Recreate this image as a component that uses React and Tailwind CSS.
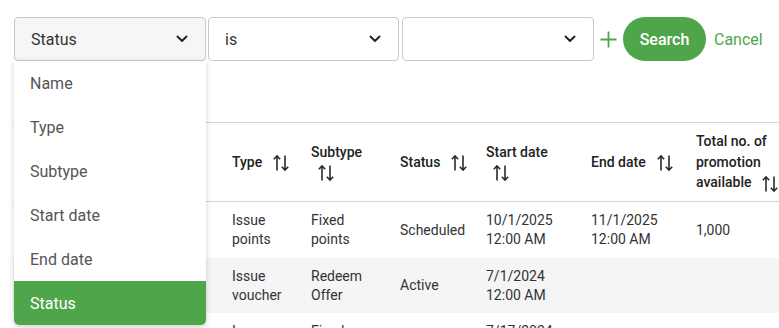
import React from "react";

const GREEN = "#4fa64a";

function Chevron() {
  return (
    <svg width="12" height="8" viewBox="0 0 12 8" fill="none">
      <path d="M1.5 1.5l4.5 4.5 4.5-4.5" stroke="#222" strokeWidth="1.9" strokeLinecap="round" strokeLinejoin="round" />
    </svg>
  );
}

function SortIcon() {
  return (
    <svg className="inline-block align-middle" width="18" height="18" viewBox="0 0 18 18" fill="none">
      <path d="M5 16.5V2M1.8 5.2L5 2l3.2 3.2" stroke="#2b2b2b" strokeWidth="1.6" />
      <path d="M13 1.5V16M9.8 12.8L13 16l3.2-3.2" stroke="#2b2b2b" strokeWidth="1.6" />
    </svg>
  );
}

function Select({ label, className = "", active = false }) {
  return (
    <div
      className={`flex h-[44px] items-center justify-between rounded-[4px] border border-[#c9c9c9] pl-[16px] pr-[17px] text-[16px] text-[#333] ${
        active ? "bg-[#f6f6f6]" : "bg-white"
      } ${className}`}
    >
      <span className="pt-[2px]">{label}</span>
      <Chevron />
    </div>
  );
}

const cols = "grid grid-cols-[38px_165px_79px_89px_86px_105px_105px_130px]";

const rows = [
  {
    name: "FQ | 1000 points",
    type: ["Issue", "points"],
    subtype: ["Fixed", "points"],
    status: "Scheduled",
    start: ["10/1/2025", "12:00 AM"],
    end: ["11/1/2025", "12:00 AM"],
    total: "1,000",
    h: "h-[56px]",
    bg: "bg-white",
  },
  {
    name: "Redeem offer",
    type: ["Issue", "voucher"],
    subtype: ["Redeem", "Offer"],
    status: "Active",
    start: ["7/1/2024", "12:00 AM"],
    end: [],
    total: "",
    h: "h-[55px]",
    bg: "bg-[#f5f5f5]",
  },
  {
    name: "FQ | 1000 points | 0500",
    type: ["Issue", "points"],
    subtype: ["Fixed", "points"],
    status: "Active",
    start: ["7/17/2024", "12:00 AM"],
    end: [],
    total: "",
    h: "h-[56px]",
    bg: "bg-white",
  },
];

function Lines({ items }) {
  return (
    <div>
      {items.map((t) => (
        <div key={t}>{t}</div>
      ))}
    </div>
  );
}

export default function App() {
  const menu = ["Name", "Type", "Subtype", "Start date", "End date", "Status"];

  return (
    <div className="relative h-[328px] w-[779px] overflow-hidden bg-white font-['Roboto','Liberation_Sans',sans-serif]">
      {/* Filter bar */}
      <div className="flex items-center pl-[14px] pt-[17px]">
        <Select label="Status" active className="w-[192px]" />
        <Select label="is" className="ml-[2px] w-[191px]" />
        <Select label="" className="ml-[3px] w-[192px]" />
        <svg className="ml-[6px]" width="17" height="17" viewBox="0 0 17 17" fill="none">
          <path d="M8.5 0.5v16M0.5 8.5h16" stroke={GREEN} strokeWidth="1.8" />
        </svg>
        <button
          type="button"
          className="ml-[6px] flex h-[44px] w-[83px] items-center justify-center rounded-full bg-[#4fa64a] pt-[2px] text-[16px] font-medium text-white"
        >
          Search
        </button>
        <button type="button" className="ml-[8px] pt-[2px] text-[16px] text-[#4fa64a]">
          Cancel
        </button>
      </div>

      {/* Table */}
      <div className="ml-[13px] mt-[61px] w-[900px]">
        <div className={`${cols} h-[80px] border-y border-[#d4d4d4] text-[14px] font-medium leading-[20px] text-[#222]`}>
          <div />
          <div className="flex items-center pl-4">Name</div>
          <div className="flex items-center whitespace-nowrap pl-4">
            Type<span className="ml-[10px]"><SortIcon /></span>
          </div>
          <div className="flex flex-col justify-center pl-4">
            <span>Subtype</span>
            <span className="ml-[6px]"><SortIcon /></span>
          </div>
          <div className="flex items-center whitespace-nowrap pl-4">
            Status<span className="ml-[10px]"><SortIcon /></span>
          </div>
          <div className="flex flex-col justify-center pl-4">
            <span>Start date</span>
            <span className="ml-[6px]"><SortIcon /></span>
          </div>
          <div className="flex items-center whitespace-nowrap pl-4">
            End date<span className="ml-[10px]"><SortIcon /></span>
          </div>
          <div className="flex flex-col justify-center whitespace-nowrap pl-4 leading-[20.5px]">
            <span>Total no. of</span>
            <span>promotion</span>
            <span>
              available<span className="ml-[10px]"><SortIcon /></span>
            </span>
          </div>
        </div>

        {rows.map((r) => (
          <div key={r.name} className={`${cols} ${r.h} ${r.bg} text-[14px] leading-[19px] text-[#333]`}>
            <div />
            <div className="flex items-center overflow-hidden whitespace-nowrap pl-4">{r.name}</div>
            <div className="flex items-center pl-4">
              <Lines items={r.type} />
            </div>
            <div className="flex items-center pl-4">
              <Lines items={r.subtype} />
            </div>
            <div className="flex items-center pl-4">{r.status}</div>
            <div className="flex items-center pl-4">
              <Lines items={r.start} />
            </div>
            <div className="flex items-center pl-4">
              <Lines items={r.end} />
            </div>
            <div className="flex items-center pl-4">{r.total}</div>
          </div>
        ))}
      </div>

      {/* Open dropdown menu */}
      <div className="absolute left-[14px] top-[61px] w-[192px] overflow-hidden rounded-b-[5px] bg-white shadow-[0_2px_6px_rgba(0,0,0,0.18)]">
        {menu.map((item) => {
          const selected = item === "Status";
          return (
            <div
              key={item}
              className={`flex h-[44px] items-center pl-[16px] pt-[2px] text-[16px] ${
                selected ? "bg-[#4fa64a] text-white" : "text-[#555]"
              }`}
            >
              {item}
            </div>
          );
        })}
      </div>
    </div>
  );
}
